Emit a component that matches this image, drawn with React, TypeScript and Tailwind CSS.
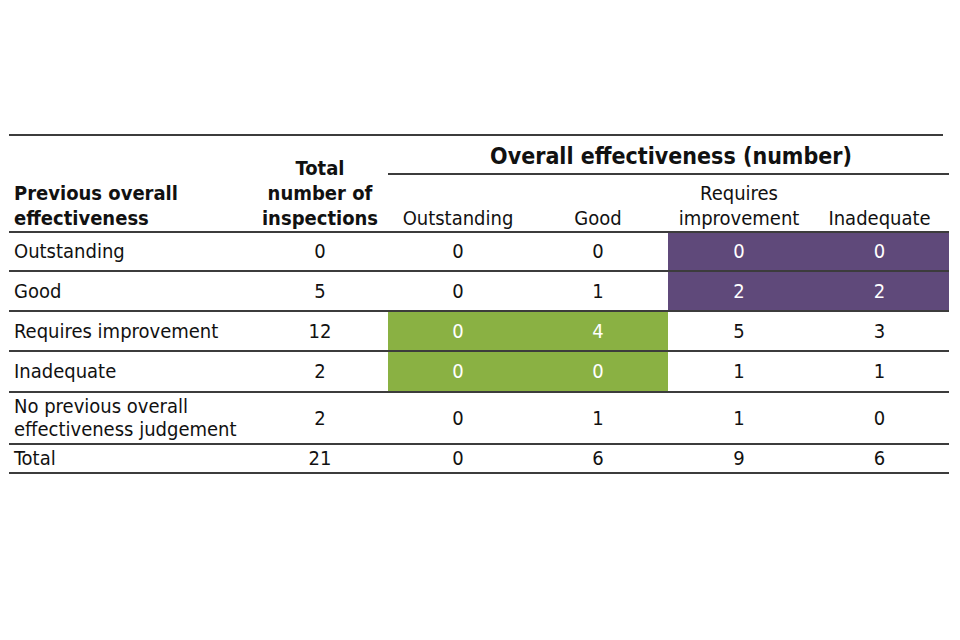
const rows = [
  { label: 'Outstanding', total: '0', cells: ['0', '0', '0', '0'], h: 'h-[39px]' },
  { label: 'Good', total: '5', cells: ['0', '1', '2', '2'], h: 'h-[40px]' },
  { label: 'Requires improvement', total: '12', cells: ['0', '4', '5', '3'], h: 'h-[40px]' },
  { label: 'Inadequate', total: '2', cells: ['0', '0', '1', '1'], h: 'h-[41px]' },
];

function cellColor(r: number, c: number) {
  if (r <= 1 && c >= 2) return 'bg-[#5f497a] text-white';
  if (r >= 2 && r <= 3 && c <= 1) return 'bg-[#8ab143] text-white';
  return 'text-[#111]';
}

export default function App() {
  return (
    <div
      className="w-[960px] h-[640px] bg-white pt-[134px] pl-[9px]"
      style={{ fontFamily: '"DejaVu Sans Condensed", Tahoma, "DejaVu Sans", sans-serif' }}
    >
      <div className="w-[934px] border-t-2 border-[#3c3c3c]" />
      <table className="w-[940px] table-fixed border-collapse text-[20px] leading-[25px] text-[#111]">
        <colgroup>
          <col className="w-[243px]" />
          <col className="w-[136px]" />
          <col className="w-[140px]" />
          <col className="w-[140px]" />
          <col className="w-[142px]" />
          <col className="w-[139px]" />
        </colgroup>
        <thead>
          <tr className="h-[38px]">
            <th rowSpan={2} className="align-bottom text-left font-bold pl-[5px] pb-0 border-b-2 border-[#3c3c3c]">
              Previous overall
              <br />
              effectiveness
            </th>
            <th rowSpan={2} className="align-bottom text-center font-bold pb-0 border-b-2 border-[#3c3c3c]">
              Total
              <br />
              number of
              <br />
              inspections
            </th>
            <th colSpan={4} className="align-middle text-center font-bold text-[23px] border-b-2 border-[#3c3c3c] pt-[4px] pl-[5px]">
              Overall effectiveness (number)
            </th>
          </tr>
          <tr className="h-[58px]">
            <th className="align-bottom font-normal text-center pb-0 border-b-2 border-[#3c3c3c]">Outstanding</th>
            <th className="align-bottom font-normal text-center pb-0 border-b-2 border-[#3c3c3c]">Good</th>
            <th className="align-bottom font-normal text-center pb-0 border-b-2 border-[#3c3c3c]">
              Requires
              <br />
              improvement
            </th>
            <th className="align-bottom font-normal text-center pb-0 border-b-2 border-[#3c3c3c]">Inadequate</th>
          </tr>
        </thead>
        <tbody>
          {rows.map((row, r) => (
            <tr key={row.label} className={row.h}>
              <td className="pl-[5px] border-b-2 border-[#3c3c3c] align-middle">{row.label}</td>
              <td className="text-center border-b-2 border-[#3c3c3c]">{row.total}</td>
              {row.cells.map((v, c) => (
                <td key={c} className={`text-center border-b-2 border-[#3c3c3c] ${cellColor(r, c)}`}>
                  {v}
                </td>
              ))}
            </tr>
          ))}
          <tr className="h-[52px]">
            <td className="pl-[5px] border-b-2 border-[#3c3c3c] leading-[23px]">
              No previous overall
              <br />
              effectiveness judgement
            </td>
            <td className="text-center border-b-2 border-[#3c3c3c]">2</td>
            <td className="text-center border-b-2 border-[#3c3c3c]">0</td>
            <td className="text-center border-b-2 border-[#3c3c3c]">1</td>
            <td className="text-center border-b-2 border-[#3c3c3c]">1</td>
            <td className="text-center border-b-2 border-[#3c3c3c]">0</td>
          </tr>
          <tr className="h-[29px]">
            <td className="pl-[5px] border-b-2 border-[#3c3c3c]">Total</td>
            <td className="text-center border-b-2 border-[#3c3c3c]">21</td>
            <td className="text-center border-b-2 border-[#3c3c3c]">0</td>
            <td className="text-center border-b-2 border-[#3c3c3c]">6</td>
            <td className="text-center border-b-2 border-[#3c3c3c]">9</td>
            <td className="text-center border-b-2 border-[#3c3c3c]">6</td>
          </tr>
        </tbody>
      </table>
    </div>
  );
}
